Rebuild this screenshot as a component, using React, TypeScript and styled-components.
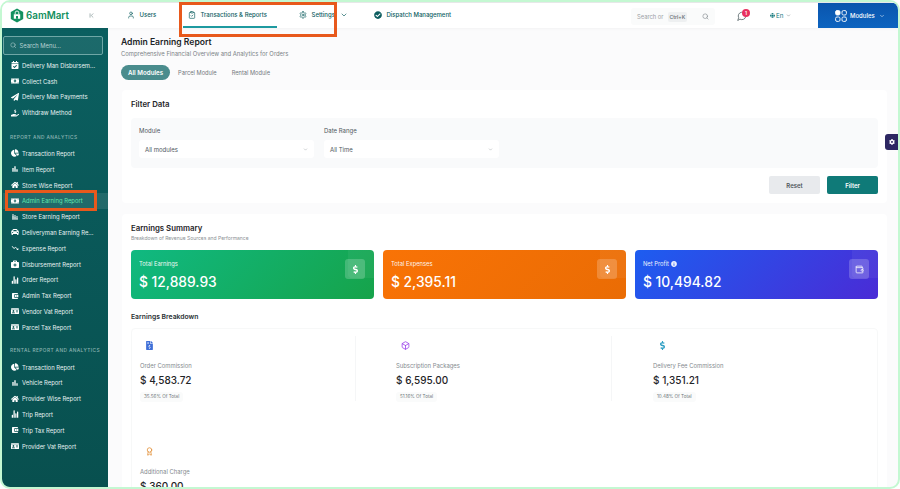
import React from 'react'
import styled, { createGlobalStyle } from 'styled-components'
import { LuChevronDown, LuChevronFirst, LuSearch, LuSettings, LuUser, LuClipboardCheck, LuMessageCircle, LuWallet, LuBox, LuAward } from 'react-icons/lu'
import {
  FaChartPie, FaHome, FaCar, FaPaperPlane, FaHandHoldingUsd, FaCalendarCheck, FaMoneyBillAlt,
  FaBriefcaseMedical, FaIdCard, FaCheckCircle, FaGlobe, FaInfoCircle, FaDollarSign, FaFileInvoiceDollar, FaCog,
} from 'react-icons/fa'
import { MdBarChart, MdTrendingDown, MdOutlineStackedBarChart, MdAccountBalanceWallet } from 'react-icons/md'
import { IoStatsChart } from 'react-icons/io5'

const GlobalStyle = createGlobalStyle`
  html, body {
    margin: 0;
    padding: 0;
    background: #ffffff;
    font-family: Inter, "Liberation Sans", sans-serif;
  }
  * { box-sizing: border-box; }
`

const Frame = styled.div`
  position: relative;
  width: 900px;
  height: 489px;
  border: 2px solid #c4f8d2;
  border-radius: 10px;
  overflow: hidden;
  display: flex;
  flex-direction: column;
  background: #fbfbfc;
`

const TopBar = styled.header`
  height: 26px;
  flex: none;
  display: flex;
  align-items: stretch;
  background: #ffffff;
  border-top: 1px solid #e6e8e8;
  box-shadow: 0 1px 3px rgba(0, 0, 0, 0.04);
  z-index: 1;
`

const Brand = styled.div`
  width: 106px;
  flex: none;
  display: flex;
  align-items: center;
  padding-left: 8px;
  gap: 2px;
`

const BrandName = styled.span`
  font-size: 9.8px;
  font-weight: 600;
  color: #12905f;
`

const Collapse = styled.span`
  display: flex;
  margin-left: 17px;
  color: #6f8486;
  font-size: 7px;
`

const NavList = styled.nav`
  display: flex;
  align-items: stretch;
  padding-left: 19px;
`

const NavItem = styled.div<{ $width: number; $active?: boolean }>`
  width: ${p => p.$width}px;
  display: flex;
  align-items: center;
  gap: 4.5px;
  padding-left: ${p => (p.$active ? 5 : 0)}px;
  font-size: 6px;
  font-weight: 500;
  white-space: nowrap;
  color: #0c5d5f;
  border-bottom: ${p => (p.$active ? '2px solid #1e9aa0' : '2px solid transparent')};
  svg { flex: none; font-size: 8px; }
`

const NavCaret = styled(LuChevronDown)`
  margin-left: 1px;
`

const SearchBox = styled.div`
  margin: 5px 0 3px 172px;
  width: 84px;
  display: flex;
  align-items: center;
  padding: 0 6px;
  background: #fafbfb;
  border-radius: 3px;
  font-size: 5.8px;
  color: #9aa1a6;
  svg { margin-left: auto; font-size: 7px; color: #7d8589; }
`

const Kbd = styled.span`
  margin-left: 4px;
  padding: 2px 2px;
  background: #eef0f1;
  border-radius: 2px;
  font-size: 5px;
  font-weight: 600;
  color: #6f777b;
`

const Chat = styled.div`
  position: relative;
  margin-left: 22px;
  display: flex;
  align-items: center;
  font-size: 10px;
  color: #59666a;
`

const Badge = styled.span`
  position: absolute;
  top: 6px;
  left: 5px;
  width: 8px;
  height: 8px;
  border-radius: 50%;
  background: #e8315f;
  color: #fff;
  font-size: 4.5px;
  font-weight: 700;
  display: flex;
  align-items: center;
  justify-content: center;
`

const Lang = styled.div`
  margin-left: 23px;
  display: flex;
  align-items: center;
  gap: 1px;
  font-size: 6.2px;
  color: #16797d;
  svg { font-size: 5px; }
`

const LangCaret = styled(LuChevronDown)`
  margin-left: 2px;
  color: #59666a;
`

const ModulesBtn = styled.div`
  margin-left: auto;
  width: 80px;
  flex: none;
  display: flex;
  align-items: center;
  padding-left: 17px;
  gap: 3px;
  background: linear-gradient(180deg, #0a55ad, #0d64c0);
  color: #ffffff;
  font-size: 6px;
  font-weight: 500;
`

const Body = styled.div`
  flex: 1;
  min-height: 0;
  display: flex;
`

const Sidebar = styled.aside`
  width: 106px;
  flex: none;
  padding: 8px 0 0 1px;
  background: linear-gradient(180deg, #0b5f60, #08504f);
  border-radius: 0 0 0 6px;
  color: #e6f1f1;
`

const SideSearch = styled.div`
  width: 100px;
  height: 19px;
  display: flex;
  align-items: center;
  gap: 3px;
  padding-left: 6px;
  border: 1px solid #6fa7a6;
  border-radius: 2px;
  background: rgba(255, 255, 255, 0.07);
  font-size: 5.8px;
  color: #b7d2d2;
  margin-bottom: 2.4px;
  svg { font-size: 6.5px; }
`

const SideHeading = styled.div<{ $top: number }>`
  height: 8px;
  margin: ${p => p.$top}px 0 5px 7px;
  display: flex;
  align-items: center;
  font-size: 4.8px;
  font-weight: 500;
  letter-spacing: 0.4px;
  white-space: nowrap;
  color: #8cb4b3;
`

const SideRow = styled.div<{ $active?: boolean }>`
  height: 15.8px;
  display: flex;
  align-items: center;
  gap: 3.5px;
  padding-left: 7.5px;
  font-size: 5.9px;
  white-space: nowrap;
  color: ${p => (p.$active ? '#5fe8b0' : '#e6f1f1')};
  background: ${p => (p.$active ? 'rgba(255,255,255,0.1)' : 'transparent')};
  svg { flex: none; width: 8px; height: 8px; color: #ffffff; }
`

const Main = styled.main`
  flex: 1;
  min-width: 0;
  overflow: hidden;
  padding: 8px 11px 0 13px;
`

const PageTitle = styled.h1`
  margin: 0;
  font-size: 8.6px;
  line-height: 12px;
  font-weight: 600;
  color: #1c2427;
`

const PageSub = styled.p`
  margin: 2px 0 7px;
  font-size: 5.9px;
  line-height: 8px;
  color: #7b8387;
`

const Tabs = styled.div`
  display: flex;
  align-items: center;
  height: 15px;
  margin-bottom: 10px;
`

const Tab = styled.span<{ $active?: boolean }>`
  padding: 0 7px;
  height: 15px;
  margin-right: 1px;
  display: flex;
  align-items: center;
  border-radius: 8px;
  font-size: ${p => (p.$active ? 6.2 : 5.7)}px;
  font-weight: ${p => (p.$active ? 600 : 400)};
  color: ${p => (p.$active ? '#ffffff' : '#73797d')};
  background: ${p => (p.$active ? '#4a8c8d' : 'transparent')};
`

const Card = styled.section<{ $height?: number }>`
  margin-left: 1px;
  padding: 9px 9px 9px;
  background: #ffffff;
  border-radius: 4px;
  ${p => (p.$height ? `height: ${p.$height}px;` : '')}
  margin-bottom: 11px;
`

const CardTitle = styled.h2`
  margin: 0;
  font-size: 7.8px;
  line-height: 10px;
  font-weight: 600;
  color: #1f2629;
`

const FilterPanel = styled.div`
  margin-top: 9px;
  height: 50px;
  padding: 9px 8px 0;
  display: flex;
  gap: 10px;
  background: #f9fafb;
  border-radius: 4px;
`

const Field = styled.div`
  width: 175px;
`

const FieldLabel = styled.div`
  font-size: 6px;
  line-height: 8px;
  color: #4f575b;
  margin-bottom: 5px;
`

const Select = styled.div`
  height: 18px;
  display: flex;
  align-items: center;
  justify-content: space-between;
  padding: 0 6px;
  background: #ffffff;
  border-radius: 3px;
  font-size: 6px;
  color: #50585c;
  svg { font-size: 5px; color: #8d9498; }
`

const Actions = styled.div`
  margin-top: 8px;
  display: flex;
  justify-content: flex-end;
  gap: 7px;
`

const ActionButton = styled.div<{ $primary?: boolean }>`
  width: 51px;
  height: 18px;
  display: flex;
  align-items: center;
  justify-content: center;
  border-radius: 2px;
  font-size: 6px;
  font-weight: 600;
  color: ${p => (p.$primary ? '#ffffff' : '#4f565b')};
  background: ${p => (p.$primary ? '#0f7a78' : '#e8eaed')};
`

const CardSub = styled.p`
  margin: 2px 0 8px;
  font-size: 5px;
  line-height: 7px;
  color: #8b9195;
`

const SummaryRow = styled.div`
  display: grid;
  grid-template-columns: repeat(3, 1fr);
  gap: 9px;
`

const SummaryCard = styled.div<{ $bg: string }>`
  position: relative;
  height: 49px;
  padding: 9px 9px 0 8px;
  display: flex;
  justify-content: space-between;
  border-radius: 4px;
  overflow: hidden;
  color: #ffffff;
  background: ${p => p.$bg};
  &::before {
    content: '';
    position: absolute;
    top: -12px;
    right: -4px;
    width: 30px;
    height: 40px;
    border-radius: 4px;
    background: rgba(255, 255, 255, 0.05);
  }
`

const SummaryText = styled.div`
  padding-top: 1px;
`

const SummaryLabel = styled.div`
  display: flex;
  align-items: center;
  gap: 2px;
  font-size: 5.8px;
  line-height: 8px;
  opacity: 0.92;
  svg { font-size: 6px; }
`

const SummaryValue = styled.div`
  margin-top: 5px;
  font-size: 13.8px;
  line-height: 18px;
  font-weight: 500;
`

const SummaryIcon = styled.div`
  position: relative;
  width: 20px;
  height: 20px;
  display: flex;
  align-items: center;
  justify-content: center;
  border-radius: 3px;
  background: rgba(255, 255, 255, 0.2);
  font-size: 9px;
`

const BreakTitle = styled.h3`
  margin: 13px 0 7px;
  font-size: 6.8px;
  line-height: 9px;
  font-weight: 600;
  color: #2a3135;
`

const BreakGrid = styled.div`
  display: grid;
  grid-template-columns: 224px 256px 256px;
  grid-auto-rows: 106px;
  border: 1px solid #f7f8f8;
  border-radius: 4px;
  height: 170px;
`

const BreakItem = styled.div<{ $pad: number; $divider?: boolean }>`
  margin-top: 7px;
  padding: 1px 0 0 ${p => p.$pad}px;
  height: 65px;
  border-right: ${p => (p.$divider ? '1px solid #f5f6f7' : 'none')};
`

const BreakIcon = styled.div<{ $color: string }>`
  height: 16px;
  margin-bottom: 9px;
  padding-left: 5px;
  display: flex;
  align-items: center;
  color: ${p => p.$color};
  font-size: 9px;
`

const BreakLabel = styled.div`
  font-size: 5.9px;
  line-height: 8px;
  color: #858b8f;
`

const BreakValue = styled.div`
  margin-top: 3px;
  font-size: 10px;
  line-height: 14px;
  font-weight: 500;
  color: #1f2528;
`

const Share = styled.span`
  display: block;
  width: fit-content;
  margin-top: 5px;
  padding: 2px 4px;
  border-radius: 3px;
  background: #fafbfb;
  font-size: 4.6px;
  line-height: 6px;
  color: #6f767a;
`

const Highlight = styled.div<{ $x: number; $y: number; $w: number; $h: number }>`
  position: absolute;
  left: ${p => p.$x}px;
  top: ${p => p.$y}px;
  width: ${p => p.$w}px;
  height: ${p => p.$h}px;
  border: 3px solid #e8591c;
  pointer-events: none;
  z-index: 3;
`

const SettingsTab = styled.div`
  position: absolute;
  right: 0;
  top: 132px;
  width: 13px;
  height: 16px;
  display: flex;
  align-items: center;
  justify-content: center;
  background: #2d2762;
  border-radius: 3px 0 0 3px;
  color: #ffffff;
  font-size: 6px;
  z-index: 2;
`

function LogoMark() {
  return (
    <svg width="14" height="15" viewBox="0 0 14 15">
      <path d="M7 0.4 13.2 4v7L7 14.6.8 11V4z" fill="#12905f" />
      <path d="M3.8 6.2h6.4v4.6H3.8z" fill="#fff" />
      <path d="M5.2 6.2V4.8a1.8 1.8 0 0 1 3.6 0v1.4" fill="none" stroke="#fff" strokeWidth="0.9" />
      <path d="M6 8h2v2.8H6z" fill="#12905f" />
    </svg>
  )
}

function ModulesIcon() {
  return (
    <svg width="12" height="12" viewBox="0 0 12 12" fill="none" stroke="#fff" strokeWidth="0.9">
      <rect x="0.6" y="0.6" width="4.4" height="4.4" rx="1.4" fill="#fff" />
      <rect x="7" y="0.6" width="4.4" height="4.4" rx="1.4" />
      <rect x="0.6" y="7" width="4.4" height="4.4" rx="1.4" />
      <rect x="7" y="7" width="4.4" height="4.4" rx="1.4" />
    </svg>
  )
}

const topRows = [
  { icon: <FaCalendarCheck />, label: 'Delivery Man Disbursem...' },
  { icon: <FaMoneyBillAlt />, label: 'Collect Cash' },
  { icon: <FaPaperPlane />, label: 'Delivery Man Payments' },
  { icon: <FaHandHoldingUsd />, label: 'Withdraw Method' },
]

const reportRows = [
  { icon: <FaChartPie />, label: 'Transaction Report' },
  { icon: <MdBarChart />, label: 'Item Report' },
  { icon: <FaHome />, label: 'Store Wise Report' },
  { icon: <FaMoneyBillAlt />, label: 'Admin Earning Report', active: true },
  { icon: <MdOutlineStackedBarChart />, label: 'Store Earning Report' },
  { icon: <FaCar />, label: 'Deliveryman Earning Re...' },
  { icon: <MdTrendingDown />, label: 'Expense Report' },
  { icon: <FaBriefcaseMedical />, label: 'Disbursement Report' },
  { icon: <IoStatsChart />, label: 'Order Report' },
  { icon: <MdAccountBalanceWallet />, label: 'Admin Tax Report' },
  { icon: <FaIdCard />, label: 'Vendor Vat Report' },
  { icon: <FaIdCard />, label: 'Parcel Tax Report' },
]

const rentalRows = [
  { icon: <FaChartPie />, label: 'Transaction Report' },
  { icon: <MdBarChart />, label: 'Vehicle Report' },
  { icon: <FaHome />, label: 'Provider Wise Report' },
  { icon: <IoStatsChart />, label: 'Trip Report' },
  { icon: <MdAccountBalanceWallet />, label: 'Trip Tax Report' },
  { icon: <FaIdCard />, label: 'Provider Vat Report' },
]

const breakdown = [
  { icon: <FaFileInvoiceDollar />, color: '#3f6fd8', label: 'Order Commission', value: '$ 4,583.72', share: '35.56% Of Total', pad: 8, divider: true },
  { icon: <LuBox />, color: '#9333ea', label: 'Subscription Packages', value: '$ 6,595.00', share: '51.16% Of Total', pad: 40, divider: true },
  { icon: <FaDollarSign />, color: '#2f9fc4', label: 'Delivery Fee Commission', value: '$ 1,351.21', share: '10.48% Of Total', pad: 41 },
  { icon: <LuAward />, color: '#e08a2e', label: 'Additional Charge', value: '$ 360.00', pad: 8 },
]

const summary = [
  { label: 'Total Earnings', value: '$ 12,889.93', bg: 'linear-gradient(135deg, #10b981, #16a34a)', icon: <FaDollarSign /> },
  { label: 'Total Expenses', value: '$ 2,395.11', bg: 'linear-gradient(135deg, #f97306, #ea6c04)', icon: <FaDollarSign /> },
  { label: 'Net Profit', value: '$ 10,494.82', bg: 'linear-gradient(135deg, #1d5df0, #4a2bd6)', icon: <LuWallet />, info: true },
]

export default function App() {
  return (
    <>
      <GlobalStyle />
      <Frame>
        <TopBar>
          <Brand>
            <LogoMark />
            <BrandName>6amMart</BrandName>
            <Collapse><LuChevronFirst /></Collapse>
          </Brand>
          <NavList>
            <NavItem $width={56}><LuUser />Users</NavItem>
            <NavItem $width={94} $active><LuClipboardCheck />Transactions &amp; Reports</NavItem>
            <NavItem $width={22} />
            <NavItem $width={75}><LuSettings />Settings <NavCaret /></NavItem>
            <NavItem $width={85}><FaCheckCircle />Dispatch Management</NavItem>
          </NavList>
          <SearchBox>Search or <Kbd>Ctrl+K</Kbd><LuSearch /></SearchBox>
          <Chat><LuMessageCircle /><Badge>1</Badge></Chat>
          <Lang><FaGlobe />En <LangCaret /></Lang>
          <ModulesBtn><ModulesIcon />Modules <NavCaret /></ModulesBtn>
        </TopBar>
        <Body>
          <Sidebar>
            <SideSearch><LuSearch />Search Menu...</SideSearch>
            {topRows.map(r => <SideRow key={r.label}>{r.icon}{r.label}</SideRow>)}
            <SideHeading $top={12}>REPORT AND ANALYTICS</SideHeading>
            {reportRows.map(r => <SideRow key={r.label} $active={r.active}>{r.icon}{r.label}</SideRow>)}
            <SideHeading $top={11}>RENTAL REPORT AND ANALYTICS</SideHeading>
            {rentalRows.map(r => <SideRow key={r.label}>{r.icon}{r.label}</SideRow>)}
          </Sidebar>
          <Main>
            <PageTitle>Admin Earning Report</PageTitle>
            <PageSub>Comprehensive Financial Overview and Analytics for Orders</PageSub>
            <Tabs>
              <Tab $active>All Modules</Tab>
              <Tab>Parcel Module</Tab>
              <Tab>Rental Module</Tab>
            </Tabs>
            <Card $height={113}>
              <CardTitle>Filter Data</CardTitle>
              <FilterPanel>
                <Field>
                  <FieldLabel>Module</FieldLabel>
                  <Select>All modules <LuChevronDown /></Select>
                </Field>
                <Field>
                  <FieldLabel>Date Range</FieldLabel>
                  <Select>All Time <LuChevronDown /></Select>
                </Field>
              </FilterPanel>
              <Actions>
                <ActionButton>Reset</ActionButton>
                <ActionButton $primary>Filter</ActionButton>
              </Actions>
            </Card>
            <Card>
              <CardTitle>Earnings Summary</CardTitle>
              <CardSub>Breakdown of Revenue Sources and Performance</CardSub>
              <SummaryRow>
                {summary.map(s => (
                  <SummaryCard key={s.label} $bg={s.bg}>
                    <SummaryText>
                      <SummaryLabel>{s.label} {s.info && <FaInfoCircle />}</SummaryLabel>
                      <SummaryValue>{s.value}</SummaryValue>
                    </SummaryText>
                    <SummaryIcon>{s.icon}</SummaryIcon>
                  </SummaryCard>
                ))}
              </SummaryRow>
              <BreakTitle>Earnings Breakdown</BreakTitle>
              <BreakGrid>
                {breakdown.map(b => (
                  <BreakItem key={b.label} $pad={b.pad} $divider={b.divider}>
                    <BreakIcon $color={b.color}>{b.icon}</BreakIcon>
                    <BreakLabel>{b.label}</BreakLabel>
                    <BreakValue>{b.value}</BreakValue>
                    {b.share && <Share>{b.share}</Share>}
                  </BreakItem>
                ))}
              </BreakGrid>
            </Card>
          </Main>
        </Body>
        <Highlight $x={177} $y={0} $w={158} $h={35} />
        <Highlight $x={3} $y={188} $w={92} $h={21} />
        <SettingsTab><FaCog /></SettingsTab>
      </Frame>
    </>
  )
}
